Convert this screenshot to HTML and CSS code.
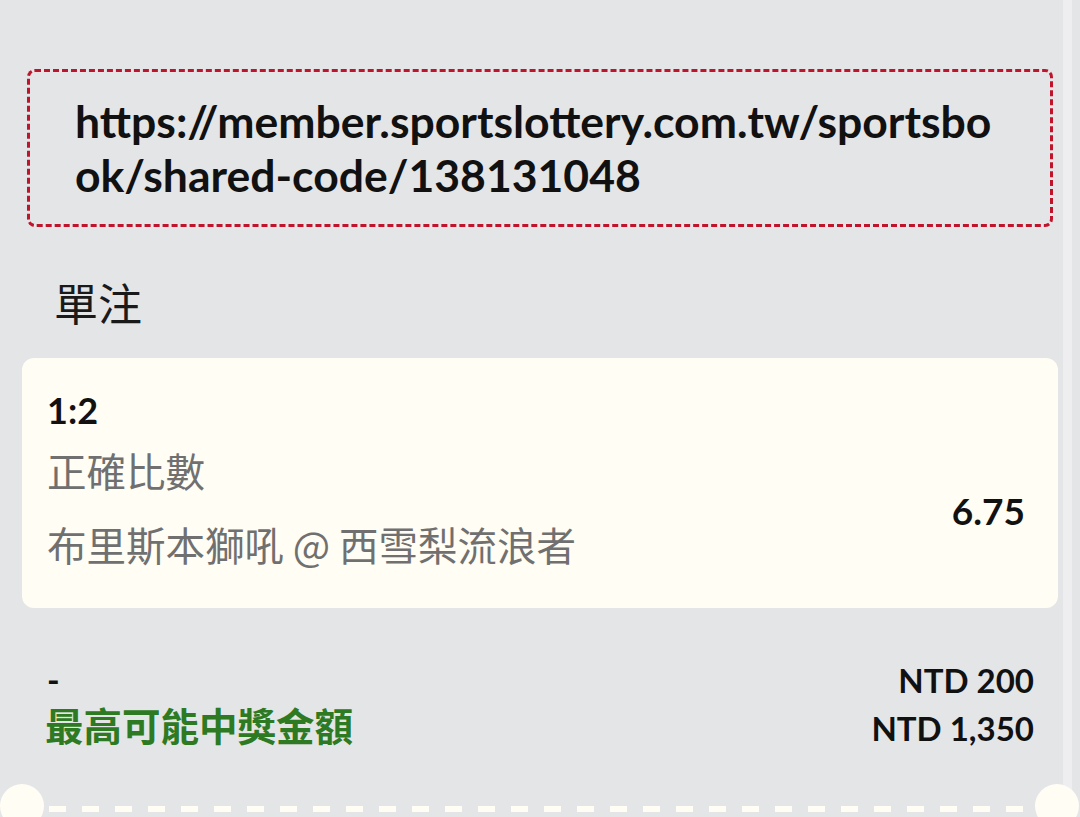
FILE: index.html
```html
<!DOCTYPE html>
<html>
<head>
<meta charset="utf-8">
<title>單注分享</title>
<link rel="stylesheet" href="styles.css">
</head>
<body>

<div class="page">
  <div class="main">
    <div class="share-box">
      <div class="share-link">https://member.sportslottery.com.tw/sportsbook/shared-code/138131048</div>
    </div>

    <h3 class="section-title">單注</h3>

    <div class="bet-card">
      <div class="bet-info">
        <div class="bet-pick">1:2</div>
        <div class="bet-market">正確比數</div>
        <div class="bet-event">布里斯本獅吼 @ 西雪梨流浪者</div>
      </div>
      <div class="bet-odds">6.75</div>
    </div>

    <div class="summary">
      <div class="summary-row">
        <span class="summary-label">-</span>
        <span class="summary-value">NTD 200</span>
      </div>
      <div class="summary-row">
        <span class="summary-label win">最高可能中獎金額</span>
        <span class="summary-value">NTD 1,350</span>
      </div>
    </div>

    <div class="ticket-cut">
      <span class="notch"></span>
      <span class="cut-line"></span>
      <span class="notch"></span>
    </div>
  </div>
  <div class="rail"></div>
</div>

</body>
</html>
```

FILE: styles.css
```css
html, body {
  margin: 0;
  height: 100%;
  overflow: hidden;
}

body {
  background-color: #e4e5e7;
  font-family: Lato, "Noto Sans CJK TC", sans-serif;
  color: #111;
}

.page {
  display: flex;
  min-height: 100%;
}

.main {
  width: 1063px;
  padding-top: 69px;
}

.rail {
  width: 9px;
  background-color: #eeeef1;
}

.share-box {
  margin: 0 10px 0 27px;
  padding: 22px 45px 22px 45px;
  border: 3px dashed #c0142d;
  border-radius: 8px;
}

.share-link {
  font-size: 44.5px;
  font-weight: 700;
  line-height: 54px;
  word-break: break-all;
}

.section-title {
  margin: 46px 0 27px 54px;
  font-family: "Noto Sans CJK TC", sans-serif;
  font-size: 44px;
  font-weight: 400;
  line-height: 58px;
  color: #1a1a1a;
}

.bet-card {
  display: flex;
  align-items: flex-end;
  justify-content: space-between;
  margin: 0 5px 0 22px;
  padding: 30px 33px 36px 25px;
  background-color: #fffdf4;
  border-radius: 12px;
}

.bet-pick {
  font-size: 36px;
  font-weight: 700;
  line-height: 44px;
}

.bet-market,
.bet-event {
  font-family: "Noto Sans CJK TC", sans-serif;
  font-size: 39.5px;
  line-height: 56px;
  color: #707070;
  margin-top: 10px;
}

.bet-event {
  margin-top: 18px;
}

.bet-odds {
  margin-bottom: 39px;
  font-size: 37px;
  font-weight: 700;
  line-height: 44px;
}

.summary {
  padding: 50px 29px 0 47px;
}

.summary-row {
  display: flex;
  justify-content: space-between;
  align-items: baseline;
}

.summary-label {
  font-size: 34px;
  font-weight: 700;
  line-height: 44px;
}

.summary-label.win {
  font-family: "Noto Sans CJK TC", sans-serif;
  font-size: 38.5px;
  margin-left: -2px;
  color: #2d7a22;
}

.summary-value {
  font-size: 33px;
  font-weight: 700;
  line-height: 44px;
}

.ticket-cut {
  position: relative;
  display: flex;
  align-items: flex-start;
  margin: 34px -16px 0 0;
}

.notch {
  flex: none;
  width: 44px;
  height: 44px;
  border-radius: 50%;
  background-color: #fffdf4;
}

.cut-line {
  flex: 1;
  height: 6px;
  margin: 22px 7px 0 5px;
  background-image: repeating-linear-gradient(to right, #fffdf4 0 17px, transparent 17px 33px);
}
```
